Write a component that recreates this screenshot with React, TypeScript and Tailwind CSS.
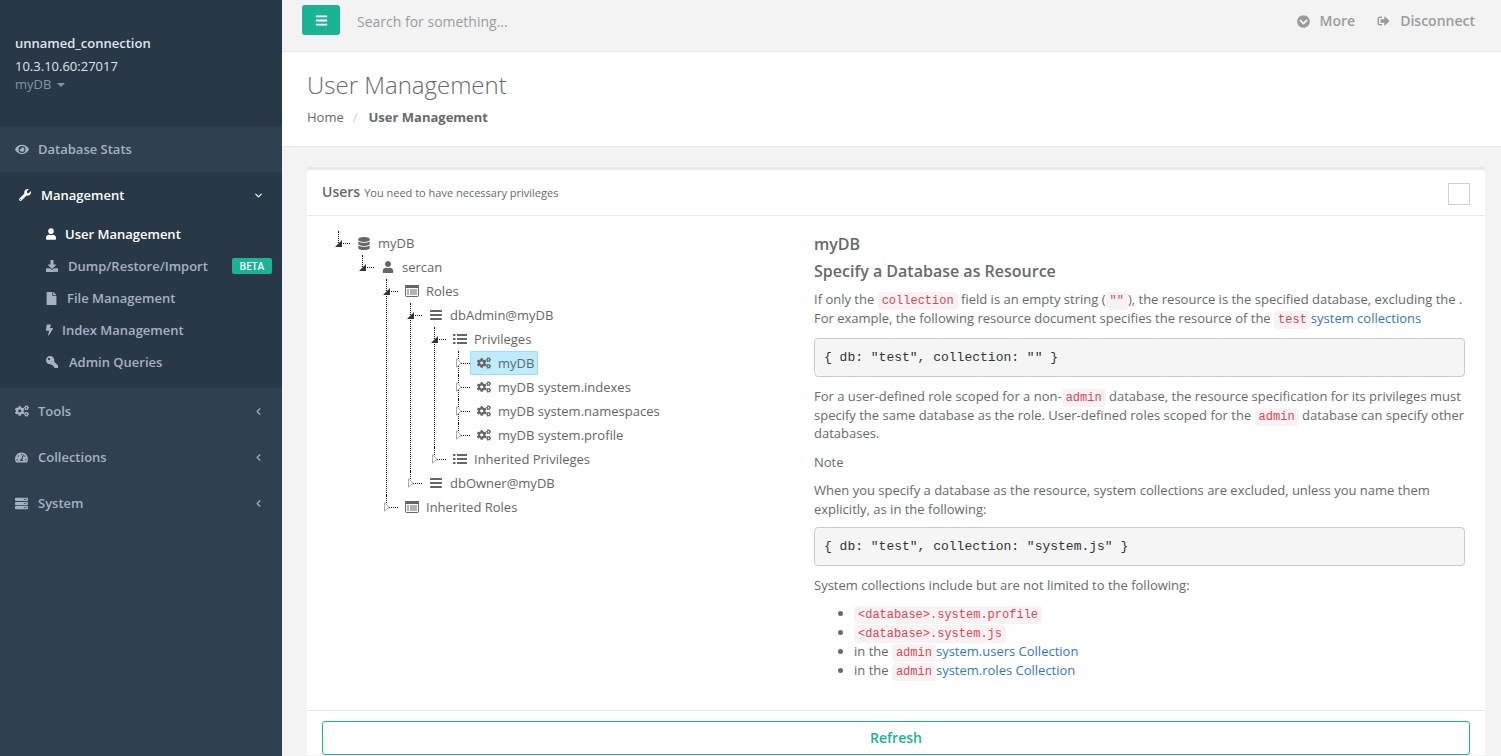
import type { ReactNode } from 'react'
import {
  FaBars, FaBolt, FaChevronCircleDown, FaCogs, FaDatabase, FaDownload, FaEye, FaFile, FaKey,
  FaServer, FaSignOutAlt, FaTachometerAlt, FaUser, FaWrench,
} from 'react-icons/fa'
import { ChevronDown, ChevronLeft } from 'lucide-react'

type TreeItem = {
  label: string
  icon: ReactNode
  open?: boolean
  selected?: boolean
  children?: TreeItem[]
}

function BarsIcon() {
  return (
    <svg viewBox="0 0 12 12" className="h-3 w-3" fill="currentColor">
      <rect x="0" y="1" width="12" height="2" rx=".4" />
      <rect x="0" y="5" width="12" height="2" rx=".4" />
      <rect x="0" y="9" width="12" height="2" rx=".4" />
    </svg>
  )
}

function ListIcon() {
  return (
    <svg viewBox="0 0 14 12" className="h-3 w-[14px]" fill="currentColor">
      <rect x="0" y="1" width="2.5" height="2" />
      <rect x="0" y="5" width="2.5" height="2" />
      <rect x="0" y="9" width="2.5" height="2" />
      <rect x="4" y="1" width="10" height="2" />
      <rect x="4" y="5" width="10" height="2" />
      <rect x="4" y="9" width="10" height="2" />
    </svg>
  )
}

function TableIcon() {
  return (
    <svg viewBox="0 0 14 12" className="h-3 w-[14px]">
      <rect x=".5" y=".5" width="13" height="11" rx="1" fill="#fff" stroke="currentColor" />
      <rect x="0" y="0" width="14" height="3" rx="1" fill="currentColor" />
      <path d="M2 5h2M5 5h7M2 7h2M5 7h7M2 9h2M5 9h7" stroke="currentColor" />
    </svg>
  )
}

const cogs = <FaCogs className="h-[14px] w-[14px]" />

const tree: TreeItem = {
  label: 'myDB',
  icon: <FaDatabase className="h-[13px] w-[12px]" />,
  open: true,
  children: [
    {
      label: 'sercan',
      icon: <FaUser className="h-[12px] w-[12px]" />,
      open: true,
      children: [
        {
          label: 'Roles',
          icon: <TableIcon />,
          open: true,
          children: [
            {
              label: 'dbAdmin@myDB',
              icon: <BarsIcon />,
              open: true,
              children: [
                {
                  label: 'Privileges',
                  icon: <ListIcon />,
                  open: true,
                  children: [
                    { label: 'myDB', icon: cogs, selected: true },
                    { label: 'myDB system.indexes', icon: cogs },
                    { label: 'myDB system.namespaces', icon: cogs },
                    { label: 'myDB system.profile', icon: cogs },
                  ],
                },
                { label: 'Inherited Privileges', icon: <ListIcon /> },
              ],
            },
            { label: 'dbOwner@myDB', icon: <BarsIcon /> },
          ],
        },
        { label: 'Inherited Roles', icon: <TableIcon /> },
      ],
    },
  ],
}

function TreeNode({ item, last }: { item: TreeItem; last: boolean }) {
  return (
    <li className="relative">
      {/* dotted connector */}
      <span
        className={`absolute left-[12px] top-0 border-l border-dotted border-[#111] ${last ? 'h-[12px]' : 'h-full'}`}
      />
      <div className="relative flex h-6 items-center">
        <span className="absolute left-[13px] top-[12px] w-[11px] border-t border-dotted border-[#111]" />
        {item.open ? (
          <svg viewBox="0 0 7 7" className="absolute left-[9px] top-[9px] h-[7px] w-[7px]">
            <path d="M7 0V7H0Z" fill="#333" />
          </svg>
        ) : (
          <svg viewBox="0 0 6 10" className="absolute left-[10px] top-[7px] h-[10px] w-[6px]">
            <path d="M.5.8 5.4 5 .5 9.2Z" fill="#fff" stroke="#aaa" />
          </svg>
        )}
        <div
          className={`ml-6 flex h-6 items-center rounded-[2px] pr-1 ${item.selected ? 'bg-[#beebff] shadow-[inset_0_0_0_1px_#99defd]' : ''}`}
        >
          <span className="flex w-6 justify-center pl-[4px] text-[#666]">{item.icon}</span>
          <span className="pl-1 text-[#666]">{item.label}</span>
        </div>
      </div>
      {item.children && (
        <ul className="ml-6">
          {item.children.map((child, i) => (
            <TreeNode key={child.label + i} item={child} last={i === item.children!.length - 1} />
          ))}
        </ul>
      )}
    </li>
  )
}

function Code({ children }: { children: ReactNode }) {
  return (
    <code className="rounded-[4px] bg-[#f9f2f4] px-[4px] py-[2px] font-['Liberation_Mono',monospace] text-[12px] leading-none text-[#d9484f]">
      {children}
    </code>
  )
}

function Link({ children }: { children: ReactNode }) {
  return <span className="text-[#337ab7]">{children}</span>
}

function Pre({ className, children }: { className: string; children: string }) {
  return (
    <pre className={`h-[39px] rounded-[4px] border border-[#ccc] bg-[#f5f5f5] px-[9px] py-[10px] font-['Liberation_Mono',monospace] text-[13px] leading-[18px] text-[#333] ${className}`}>
      {children}
    </pre>
  )
}

const subItems = [
  { label: 'Dump/Restore/Import', icon: <FaDownload className="h-3 w-3" />, width: 'w-[22px]', beta: true },
  { label: 'File Management', icon: <FaFile className="h-[13px] w-[11px]" />, width: 'w-[21px]' },
  { label: 'Index Management', icon: <FaBolt className="h-3 w-[7px]" />, width: 'w-[16px]' },
  { label: 'Admin Queries', icon: <FaKey className="h-3 w-3 -scale-x-100" />, width: 'w-[23px]' },
]

const bottomItems = [
  { label: 'Tools', icon: <FaCogs className="h-[14px] w-[14px]" /> },
  { label: 'Collections', icon: <FaTachometerAlt className="h-[13px] w-[13px]" /> },
  { label: 'System', icon: <FaServer className="h-[13px] w-[13px]" /> },
]

function Sidebar() {
  return (
    <aside className="h-full w-[282px] shrink-0 bg-[#2f4050] text-[13px] font-semibold text-[#a7b1c2]">
      <div className="h-[126px] bg-[#293846] pl-[15px] pt-[33px]">
        <div className="leading-[20px] text-[#dfe4ed]">unnamed_connection</div>
        <div className="mt-[3px] font-normal leading-[20px] text-[#dfe4ed]">10.3.10.60:27017</div>
        <div className="-mt-[1px] flex items-center font-normal leading-[18px] text-[#8095a8]">
          myDB
          <span className="ml-[6px] mt-[2px] h-0 w-0 border-x-[4px] border-t-[4px] border-x-transparent border-t-[#8095a8]" />
        </div>
      </div>
      <div className="flex h-[46px] items-center pl-[15px]">
        <span className="flex w-[23px]">
          <FaEye className="h-[13px] w-[14px]" />
        </span>
        Database Stats
      </div>
      <div className="h-[216px] bg-[#293846]">
        <div className="flex h-[46px] items-center pl-[19px] text-white">
          <span className="flex w-[22px]">
            <FaWrench className="h-3 w-3" />
          </span>
          Management
          <ChevronDown className="ml-auto mr-[18px] h-[11px] w-[11px]" strokeWidth={2.5} />
        </div>
        <div className="flex h-8 items-center pl-[46px] text-white">
          <span className="flex w-[19px]">
            <FaUser className="h-3 w-[10px]" />
          </span>
          User Management
        </div>
        {subItems.map((item) => (
          <div key={item.label} className="flex h-8 items-center pl-[46px]">
            <span className={`flex ${item.width}`}>{item.icon}</span>
            {item.label}
            {item.beta && (
              <span className="ml-auto mr-[10px] rounded-[2px] bg-[#1ab394] px-[8px] text-[10px] leading-[16px] text-white">
                BETA
              </span>
            )}
          </div>
        ))}
      </div>
      {bottomItems.map((item) => (
        <div key={item.label} className="flex h-[46px] items-center pl-[15px]">
          <span className="flex w-[23px]">{item.icon}</span>
          {item.label}
          <ChevronLeft className="ml-auto mr-[18px] h-[11px] w-[11px]" strokeWidth={2.5} />
        </div>
      ))}
    </aside>
  )
}

export default function App() {
  return (
    <div className="flex h-[756px] overflow-hidden bg-[#f3f3f4] font-['Open_Sans',sans-serif] text-[13px] leading-[18.57px] text-[#676a6c]">
      <Sidebar />
      <main className="min-w-0 flex-1">
        {/* Top bar */}
        <div className="flex h-[52px] items-start border-b border-[#e7eaec] pl-5 pr-[26px]">
          <button className="mt-[5px] flex h-[30px] w-[38px] items-center justify-center rounded-[3px] bg-[#1ab394] text-white">
            <FaBars className="h-[13px] w-[13px]" />
          </button>
          <span className="ml-[17px] mt-[13px] text-[14px] leading-[18px] text-[#999c9e]">Search for something...</span>
          <div className="ml-auto mt-[12px] flex items-center text-[14px] font-semibold leading-[18px] text-[#999c9e]">
            <FaChevronCircleDown className="mr-[10px] h-[13px] w-[13px]" />
            More
            <FaSignOutAlt className="ml-[22px] mr-[10px] h-3 w-[13px]" />
            Disconnect
          </div>
        </div>

        {/* Page heading */}
        <div className="h-[95px] border-b border-[#e7eaec] bg-white pl-[25px] pt-[16px]">
          <h2 className="text-[24px] font-light leading-[34px] text-[#676a6c]">User Management</h2>
          <div className="mt-[6px] flex leading-[18px]">
            Home
            <span className="mx-[9px] text-[#ccc]">/</span>
            <strong className="ml-[2px] font-bold">User Management</strong>
          </div>
        </div>

        {/* Card */}
        <div className="ml-[25px] mr-4 mt-5 border-t-[3px] border-[#e7eaec] bg-white">
          <div className="flex h-[46px] items-center border-b border-[#e7eaec] px-[15px]">
            <span className="text-[14px] font-semibold">Users</span>
            <span className="ml-[4px] mt-[1px] text-[11px]">You need to have necessary privileges</span>
            <span className="ml-auto mt-[2px] h-[22px] w-[22px] border border-[#d5cfca] bg-white" />
          </div>
          <div className="flex h-[494px] pl-[19px] pt-[15px]">
            <div className="w-[488px] shrink-0">
              <ul>
                <TreeNode item={tree} last />
              </ul>
            </div>
            <div className="w-[651px] shrink-0">
              <h3 className="-mt-[6px] pt-[9px] text-[16px] font-semibold leading-[20px]">myDB</h3>
              <h3 className="mt-[7px] text-[16px] font-semibold leading-[20px]">Specify a Database as Resource</h3>
              <p className="mt-[9px] whitespace-nowrap">
                If only the <Code>collection</Code> field is an empty string (<Code>""</Code>), the resource is the specified database, excluding the .
                <br />
                For example, the following resource document specifies the resource of the <Code>test</Code>
                <Link>system collections</Link>
              </p>
              <Pre className="mb-[10px] mt-[11px]">{'{ db: "test", collection: "" }'}</Pre>
              <p className="whitespace-nowrap">
                For a user-defined role scoped for a non-<Code>admin</Code> database, the resource specification for its privileges must
                <br />
                specify the same database as the role. User-defined roles scoped for the <Code>admin</Code> database can specify other
                <br />
                databases.
              </p>
              <p className="mt-[10px]">Note</p>
              <p className="mt-[10px] whitespace-nowrap">
                When you specify a database as the resource, system collections are excluded, unless you name them
                <br />
                explicitly, as in the following:
              </p>
              <Pre className="mb-[10px] mt-[8px]">{'{ db: "test", collection: "system.js" }'}</Pre>
              <p>System collections include but are not limited to the following:</p>
              <ul className="mt-[10px] list-disc pl-10">
                <li>
                  <Code>{'<database>.system.profile'}</Code>
                </li>
                <li>
                  <Code>{'<database>.system.js'}</Code>
                </li>
                <li className="mt-[1px]">
                  in the <Code>admin</Code>
                  <Link>system.users Collection</Link>
                </li>
                <li>
                  in the <Code>admin</Code>
                  <Link>system.roles Collection</Link>
                </li>
              </ul>
            </div>
          </div>
          <div className="border-t border-[#e7eaec] px-[15px] pt-[10px]">
            <button className="h-[34px] w-full rounded-[3px] border border-[#1ab394] bg-white text-[14px] font-semibold text-[#1ab394]">
              Refresh
            </button>
          </div>
        </div>
      </main>
    </div>
  )
}
